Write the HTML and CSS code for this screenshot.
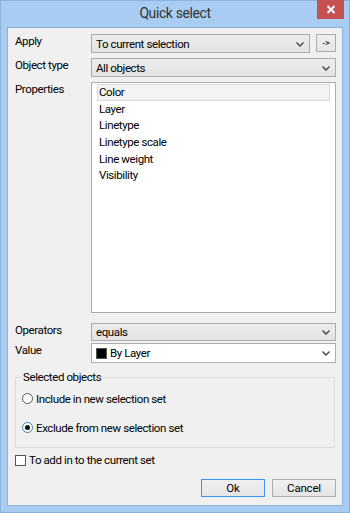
FILE: index.html
```html
<!DOCTYPE html>
<html lang="en">
<head>
    <meta charset="UTF-8">
    <title>Quick select</title>
    <link rel="stylesheet" href="styles.css">
</head>
<body>

    <div class="window">
        <!-- title bar -->
        <div class="titlebar">
            <span class="title">Quick select</span>
            <button class="close">
                <svg width="10" height="9" viewBox="0 0 10 9"><path d="M1.5 1 L8.5 8 M8.5 1 L1.5 8" stroke="#fff" stroke-width="2"/></svg>
            </button>
        </div>

        <div class="client">
            <div class="row row-apply">
                <label>Apply</label>
                <div class="combo">
                    <span>To current selection</span>
                    <svg class="chev" width="8" height="5" viewBox="0 0 8 5"><path d="M0.5 0.5 L4 4 L7.5 0.5" stroke="#444" stroke-width="1.4" fill="none"/></svg>
                </div>
                <button class="small-btn">-&gt;</button>
            </div>

            <div class="row row-type">
                <label>Object type</label>
                <div class="combo">
                    <span>All objects</span>
                    <svg class="chev" width="8" height="5" viewBox="0 0 8 5"><path d="M0.5 0.5 L4 4 L7.5 0.5" stroke="#444" stroke-width="1.4" fill="none"/></svg>
                </div>
            </div>

            <div class="row row-props">
                <label>Properties</label>
                <ul class="listbox">
                    <li class="selected">Color</li>
                    <li>Layer</li>
                    <li>Linetype</li>
                    <li>Linetype scale</li>
                    <li>Line weight</li>
                    <li>Visibility</li>
                </ul>
            </div>

            <div class="row row-ops">
                <label>Operators</label>
                <div class="combo">
                    <span>equals</span>
                    <svg class="chev" width="8" height="5" viewBox="0 0 8 5"><path d="M0.5 0.5 L4 4 L7.5 0.5" stroke="#444" stroke-width="1.4" fill="none"/></svg>
                </div>
            </div>

            <div class="row row-value">
                <label>Value</label>
                <div class="combo white">
                    <i class="swatch"></i>
                    <span>By Layer</span>
                    <svg class="chev" width="8" height="5" viewBox="0 0 8 5"><path d="M0.5 0.5 L4 4 L7.5 0.5" stroke="#444" stroke-width="1.4" fill="none"/></svg>
                </div>
            </div>

            <fieldset class="group">
                <legend>Selected objects</legend>
                <div class="option">
                    <i class="radio"></i>
                    <span>Include in new selection set</span>
                </div>
                <div class="option">
                    <i class="radio checked"></i>
                    <span>Exclude from new selection set</span>
                </div>
            </fieldset>

            <div class="check-row">
                <i class="checkbox"></i>
                <span>To add in to the current set</span>
            </div>

            <div class="buttons">
                <button class="btn default">Ok</button>
                <button class="btn">Cancel</button>
            </div>
        </div>
    </div>

</body>
</html>
```

FILE: styles.css
```css
body {
    margin: 0;
    font-family: Roboto, "Open Sans", sans-serif;
    font-size: 11.5px;
    letter-spacing: -0.4px;
    color: #000;
    background: #a6caf0;
}

.window {
    width: 350px;
    height: 513px;
    box-sizing: border-box;
    display: flex;
    flex-direction: column;
    background: #a9cdf2;
    border: 1px solid #8bb3de;
    padding: 0 6px 6px 6px;
}

/* title bar */
.titlebar {
    height: 26px;
    display: flex;
    align-items: flex-start;
    justify-content: center;
    position: relative;
}

.title {
    font-size: 14px;
    letter-spacing: -0.4px;
    color: #333;
    margin-top: 4px;
}

.close {
    position: absolute;
    top: -1px;
    right: -1px;
    width: 27px;
    height: 19px;
    background: #c75050;
    border: none;
    padding: 0;
    display: flex;
    align-items: center;
    justify-content: center;
}

/* client area */
.client {
    flex: 1;
    background: #f0f0f0;
    border: 1px solid #8bb3de;
    padding: 6px 6px 8px 6px;
    display: flex;
    flex-direction: column;
}

.row {
    display: flex;
    align-items: flex-start;
}

.row label {
    width: 76px;
    flex-shrink: 0;
    padding-left: 1px;
}

.row-type { margin-top: 5px; }
.row-props { margin-top: 5px; }
.row-ops { margin-top: 10px; }
.row-value { margin-top: 2px; }

.combo {
    flex: 1;
    height: 19px;
    box-sizing: border-box;
    border: 1px solid #acacac;
    background: linear-gradient(#ececec, #e4e4e4);
    display: flex;
    align-items: center;
    padding: 0 0 0 4px;
    position: relative;
}

.row-ops .combo { height: 18px; }

.combo.white {
    height: 20px;
    background: #fff;
    border-color: #abadb3;
}

.combo span {
    flex: 1;
    white-space: nowrap;
}

.chev {
    margin: 1px 5px 0 6px;
}

.swatch {
    width: 11px;
    height: 11px;
    background: #000;
    border: 1px solid #555;
    box-sizing: border-box;
    margin-right: 3px;
}

.small-btn {
    width: 21px;
    height: 18px;
    margin-left: 6px;
    border: 1px solid #acacac;
    background: linear-gradient(#f0f0f0, #e5e5e5);
    font-family: inherit;
    font-size: 9px;
    letter-spacing: 0;
    padding: 0;
    color: #000;
}

.row-apply .combo { flex: 0 0 219px; }

/* properties list */
.listbox {
    flex: 1;
    height: 231px;
    box-sizing: border-box;
    margin: 0;
    padding: 1px 5px;
    list-style: none;
    background: #fff;
    border: 1px solid #abadb3;
}

.listbox li {
    height: 16.7px;
    line-height: 16px;
    padding-left: 2px;
    box-sizing: border-box;
}

.listbox li.selected {
    background: #f3f3f3;
    border: 1px solid #dadada;
    padding-left: 1px;
    line-height: 14px;
}

/* group box */
.group {
    margin: 7px 1px 0 1px;
    padding: 1px 0 10px 6px;
    border: 1px solid #dcdcdc;
    height: 78px;
    box-sizing: border-box;
}

.group legend {
    padding: 0 1px;
    margin-left: 0;
}

.option {
    display: flex;
    align-items: center;
    height: 17px;
    margin-top: 5px;
}

.option + .option {
    margin-top: 12px;
}

.radio {
    width: 11px;
    height: 11px;
    box-sizing: border-box;
    border: 1px solid #555;
    border-radius: 50%;
    background: #fff;
    margin-right: 3px;
    display: flex;
    align-items: center;
    justify-content: center;
}

.radio.checked {
    border-color: #3c7fb1;
}

.radio.checked::after {
    content: "";
    width: 5px;
    height: 5px;
    border-radius: 50%;
    background: #111;
}

.check-row {
    display: flex;
    align-items: center;
    margin-top: 5px;
    margin-left: 1px;
}

.checkbox {
    width: 11px;
    height: 11px;
    box-sizing: border-box;
    border: 1px solid #555;
    background: #fff;
    margin-right: 3px;
}

.buttons {
    margin-top: auto;
    display: flex;
    justify-content: flex-end;
    gap: 7px;
}

.btn {
    width: 64px;
    height: 18px;
    border: 1px solid #acacac;
    background: linear-gradient(#f0f0f0, #e5e5e5);
    font-family: inherit;
    font-size: 11.5px;
    letter-spacing: -0.2px;
    color: #000;
    padding: 0;
}

.btn.default {
    border-color: #3399ff;
}
```
